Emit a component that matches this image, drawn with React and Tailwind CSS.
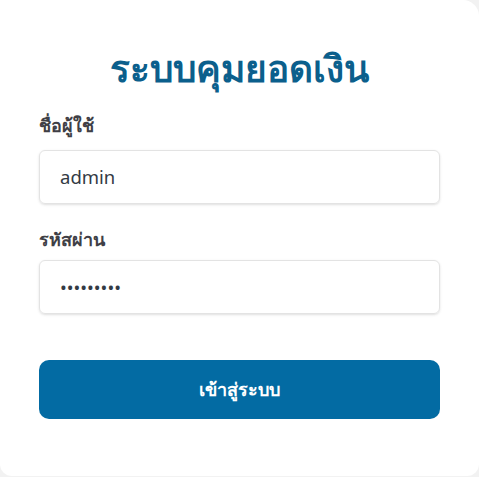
export default function App() {
  return (
    <div className="w-[479px] h-[477px] bg-[#f2f2f2] overflow-hidden" style={{ fontFamily: '"Noto Sans", "Open Sans", sans-serif' }}>
      <div className="w-[479px] h-[476px] bg-white rounded-tr-[16px] rounded-br-[12px] rounded-bl-[12px] px-[39px] pt-[40px]">
        <h1 className="text-center text-[37px] font-bold text-[#0b5f8c] leading-[56px]">ระบบคุมยอดเงิน</h1>
        <div className="mt-[16px]">
          <label className="block text-[18px] font-bold text-[#3f3f46] leading-[26px]">ชื่อผู้ใช้</label>
          <div className="mt-[12px] h-[54px] border border-[#e3e3e3] rounded-[6px] shadow-sm flex items-center px-[20px] text-[18.5px] text-[#333a44]">
            admin
          </div>
        </div>
        <div className="mt-[22px]">
          <label className="block text-[18px] font-bold text-[#3f3f46] leading-[26px]">รหัสผ่าน</label>
          <div className="mt-[8px] h-[54px] border border-[#e3e3e3] rounded-[6px] shadow-sm flex items-center px-[20px] text-[18px] text-[#333a44]">
            •••••••••
          </div>
        </div>
        <button className="mt-[46px] w-full h-[59px] rounded-[10px] bg-[#036ba3] text-white text-[18px] font-bold">
          เข้าสู่ระบบ
        </button>
      </div>
    </div>
  )
}
